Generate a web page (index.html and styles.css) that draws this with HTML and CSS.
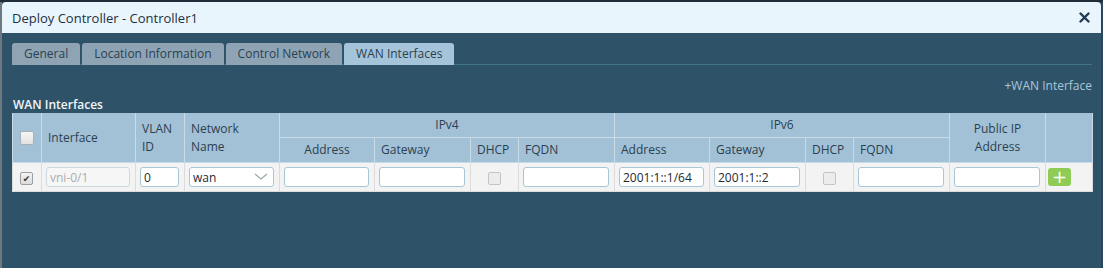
FILE: index.html
```html
<!DOCTYPE html>
<html lang="en">
<head>
    <meta charset="UTF-8">
    <title>Deploy Controller - Controller1</title>
    <link rel="stylesheet" href="styles.css">
</head>
<body>
    <div class="dialog">
        <div class="dialog-header">
            <span class="dialog-title">Deploy Controller - Controller1</span>
            <svg class="close" width="11" height="11" viewBox="0 0 11 11"><path d="M1.5 1.5l8 8M9.5 1.5l-8 8" stroke="#1f3a52" stroke-width="2.4" stroke-linecap="round"/></svg>
        </div>
        <div class="dialog-body">
            <div class="tabs">
                <div class="tab">General</div>
                <div class="tab">Location Information</div>
                <div class="tab">Control Network</div>
                <div class="tab active">WAN Interfaces</div>
            </div>

            <div class="toolbar">
                <a class="add-link">+WAN Interface</a>
            </div>
            <div class="section-title">WAN Interfaces</div>

            <table class="wan-table">
                <colgroup>
                    <col style="width:29px"><col style="width:94px"><col style="width:49px"><col style="width:95px">
                    <col style="width:95px"><col style="width:96px"><col style="width:48px"><col style="width:96px">
                    <col style="width:95px"><col style="width:96px"><col style="width:48px"><col style="width:96px">
                    <col style="width:96px"><col style="width:47px">
                </colgroup>
                <thead>
                    <tr>
                        <th rowspan="2" class="center"><span class="chk head-chk"></span></th>
                        <th rowspan="2">Interface</th>
                        <th rowspan="2">VLAN<br>ID</th>
                        <th rowspan="2">Network<br>Name</th>
                        <th colspan="4" class="center">IPv4</th>
                        <th colspan="4" class="center">IPv6</th>
                        <th rowspan="2" class="center">Public IP<br>Address</th>
                        <th rowspan="2"></th>
                    </tr>
                    <tr>
                        <th class="center">Address</th>
                        <th>Gateway</th>
                        <th>DHCP</th>
                        <th>FQDN</th>
                        <th>Address</th>
                        <th>Gateway</th>
                        <th>DHCP</th>
                        <th>FQDN</th>
                    </tr>
                </thead>
                <tbody>
                    <tr>
                        <td class="center"><span class="chk checked">&#x2714;</span></td>
                        <td><input class="field disabled" value="vni-0/1" disabled></td>
                        <td><input class="field" value="0"></td>
                        <td>
                            <div class="select">
                                <span>wan</span>
                                <svg width="14" height="8" viewBox="0 0 14 8"><path d="M1 1l6 5 6-5" fill="none" stroke="#9aa6ad" stroke-width="1.2"/></svg>
                            </div>
                        </td>
                        <td><input class="field"></td>
                        <td><input class="field"></td>
                        <td class="center"><span class="chk disabled-chk"></span></td>
                        <td><input class="field"></td>
                        <td><input class="field" value="2001:1::1/64"></td>
                        <td><input class="field" value="2001:1::2"></td>
                        <td class="center"><span class="chk disabled-chk"></span></td>
                        <td><input class="field"></td>
                        <td><input class="field"></td>
                        <td><button class="btn-add">+</button></td>
                    </tr>
                </tbody>
            </table>
        </div>
    </div>
</body>
</html>
```

FILE: styles.css
```css
:root {
    --header-bg: #e8f5fd;
    --body-bg: #2e5369;
    --tab-bg: #8ea4b5;
    --tab-active: #a6c4d9;
    --th-bg: #a3c1d6;
    --th-line: #c8dbe7;
    --text-dark: #2b3f4f;
}

html, body {
    margin: 0;
    padding: 0;
    height: 100%;
}

body {
    font-family: 'Open Sans', 'DejaVu Sans', sans-serif;
    font-size: 12px;
    background: linear-gradient(to right, #6d7880 2px, #2a4658 2px);
    border-top: 2px solid #1e2d38;
    box-sizing: border-box;
    overflow: hidden;
}

.dialog {
    margin-left: 2px;
    width: 1099px;
    height: 100%;
    background: var(--body-bg);
    border-radius: 4px 4px 0 0;
    overflow: hidden;
}

.dialog-header {
    height: 31px;
    background: var(--header-bg);
    display: flex;
    align-items: center;
    justify-content: space-between;
    padding: 0 10px;
}

.dialog-title {
    font-size: 13px;
    color: #1f3040;
}

.close {
    margin-right: 1px;
}

.dialog-body {
    padding: 10px 9px 0 10px;
}

.tabs {
    display: flex;
    gap: 2px;
    height: 21px;
    border-bottom: 1px solid #3f7689;
}

.tab {
    background: var(--tab-bg);
    color: var(--text-dark);
    padding: 0 12px;
    line-height: 21px;
    border-radius: 3px 3px 0 0;
    margin-bottom: -1px;
    height: 22px;
}

.tab.active {
    background: var(--tab-active);
}

.toolbar {
    display: flex;
    justify-content: flex-end;
    margin-top: 12px;
    height: 18px;
}

.add-link {
    color: #aac6da;
    line-height: 18px;
}

.section-title {
    color: #f2f6f9;
    font-weight: 600;
    line-height: 14px;
    margin-top: 3px;
    padding-left: 1px;
}

.wan-table {
    table-layout: fixed;
    width: 1080px;
    border-collapse: collapse;
    margin-top: 1px;
    background: #f3f3f3;
}

.wan-table th {
    background: var(--th-bg);
    color: var(--text-dark);
    font-weight: normal;
    text-align: left;
    padding: 0 6px;
    height: 24px;
    line-height: 18px;
    border: 1px solid var(--th-line);
    border-top: none;
}

.wan-table th.center,
.wan-table td.center {
    text-align: center;
}

.wan-table td {
    border: 1px solid #dcdcdc;
    padding: 0 5px 0 4px;
    height: 28px;
}

.field {
    box-sizing: border-box;
    width: 100%;
    height: 20px;
    border: 1px solid #a9c6d6;
    border-radius: 3px;
    background: #fff;
    font-family: inherit;
    font-size: 12px;
    color: #1e2a33;
    padding: 0 3px;
    display: block;
}

.field.disabled {
    background: #f6f6f6;
    border-color: #cdd9e0;
    color: #a8aeb2;
}

.select {
    box-sizing: border-box;
    height: 20px;
    border: 1px solid #a9c6d6;
    border-radius: 3px;
    background: #fff;
    display: flex;
    align-items: center;
    justify-content: space-between;
    padding: 0 5px 0 3px;
    color: #1e2a33;
}

.chk {
    display: inline-block;
    box-sizing: border-box;
    width: 13px;
    height: 13px;
    border: 1px solid #9aa1a6;
    border-radius: 2px;
    background: linear-gradient(#f4f4f4, #dcdcdc);
    vertical-align: middle;
    font-size: 9px;
    line-height: 11px;
    color: #333;
    text-align: center;
}

.chk.head-chk {
    width: 14px;
    height: 14px;
    border-color: #a7b1b8;
    background: linear-gradient(#f6f6f6, #e2e2e2);
}

.chk.disabled-chk {
    border-color: #c4c4c4;
    background: #ececec;
}

.btn-add {
    width: 23px;
    height: 18px;
    border: none;
    border-radius: 3px;
    background: #8fcc55;
    color: #fff;
    font-size: 18px;
    line-height: 16px;
    padding: 0;
    margin-left: -2px;
    display: block;
    font-family: 'DejaVu Sans', sans-serif;
}
```
